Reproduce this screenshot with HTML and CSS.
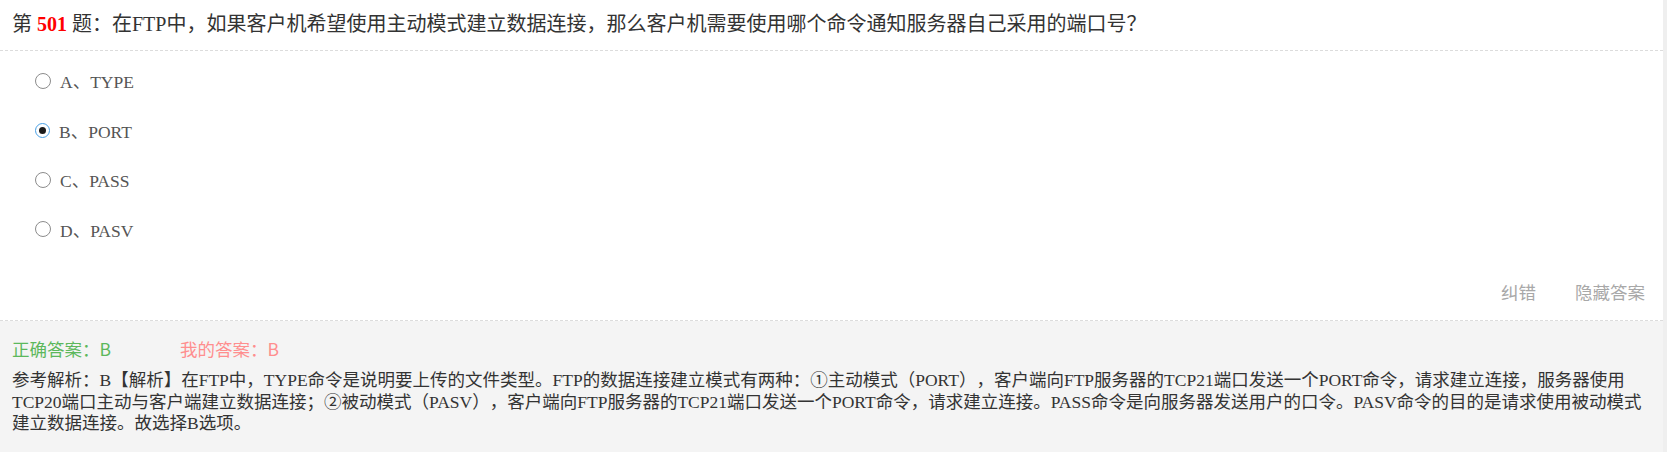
FILE: index.html
```html
<!DOCTYPE html>
<html lang="zh-CN">
<head>
<meta charset="utf-8">
<title>第501题</title>
<link rel="stylesheet" href="styles.css">
</head>
<body>
<div class="page">
  <div class="card">
    <div class="q-title">第 <span class="num">501</span> 题：在FTP中，如果客户机希望使用主动模式建立数据连接，那么客户机需要使用哪个命令通知服务器自己采用的端口号？</div>
    <ul class="options">
      <li class="option"><span class="radio"></span><span class="label">A、TYPE</span></li>
      <li class="option"><span class="radio checked"></span><span class="label">B、PORT</span></li>
      <li class="option"><span class="radio"></span><span class="label">C、PASS</span></li>
      <li class="option"><span class="radio"></span><span class="label">D、PASV</span></li>
    </ul>
    <div class="actions"><span class="action">纠错</span><span class="action">隐藏答案</span></div>
    <div class="answer">
      <div class="answer-row"><span class="correct">正确答案：B</span><span class="mine">我的答案：B</span></div>
      <div class="analysis">参考解析：B【解析】在FTP中，TYPE命令是说明要上传的文件类型。FTP的数据连接建立模式有两种：①主动模式（PORT），客户端向FTP服务器的TCP21端口发送一个PORT命令，请求建立连接，服务器使用TCP20端口主动与客户端建立数据连接；②被动模式（PASV），客户端向FTP服务器的TCP21端口发送一个PORT命令，请求建立连接。PASS命令是向服务器发送用户的口令。PASV命令的目的是请求使用被动模式建立数据连接。故选择B选项。</div>
    </div>
  </div>
</div>
</body>
</html>
```
FILE: styles.css
```css
html, body {
  margin: 0;
  padding: 0;
}
body {
  background: #efefef;
  font-family: "Liberation Serif", "Noto Sans CJK SC", serif;
  color: #333;
  text-spacing-trim: space-all;
}
.page {
  width: 1667px;
  height: 452px;
  overflow: hidden;
}
.card {
  margin-right: 4px;
  background: #fff;
}
.q-title {
  font-size: 20px;
  line-height: 24px;
  padding: 12px 12px 14px 12px;
  border-bottom: 1px dashed #dcdcdc;
  color: #333;
  white-space: nowrap;
}
.num {
  color: #ff0000;
  font-weight: bold;
}
.options {
  list-style: none;
  margin: 0;
  padding: 5px 0 0 35px;
}
.option {
  height: 49.5px;
  display: flex;
  align-items: center;
  gap: 9px;
  font-size: 17.5px;
  color: #555;
}
.radio {
  width: 14px;
  height: 14px;
  border: 1px solid #8c8c8c;
  border-radius: 50%;
  display: flex;
  align-items: center;
  justify-content: center;
  background: #fff;
  flex: none;
}
.radio.checked {
  border: 1.5px solid #48a0e6;
  width: 13px;
  height: 13px;
}
.radio.checked::after {
  content: "";
  width: 7px;
  height: 7px;
  border-radius: 50%;
  background: #1b1b1b;
}
.actions {
  display: flex;
  justify-content: flex-end;
  gap: 39px;
  padding: 26px 18px 16px 0;
  line-height: 24px;
  font-family: "Noto Sans CJK SC", sans-serif;
  font-size: 17.5px;
  color: #a8a8a8;
  border-bottom: 1px dashed #dcdcdc;
}
.answer {
  background: #f4f4f4;
  padding: 16px 14px 20px 12px;
}
.answer-row {
  display: flex;
  line-height: 24px;
  font-family: "Noto Sans CJK SC", sans-serif;
  font-size: 17.5px;
  margin-bottom: 9px;
}
.correct {
  color: #5cb85c;
  width: 168px;
}
.mine {
  color: #ff8e8e;
}
.analysis {
  font-size: 17.5px;
  line-height: 21.7px;
  color: #333;
}
```
